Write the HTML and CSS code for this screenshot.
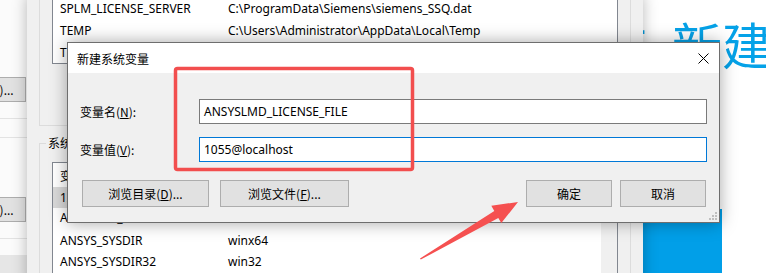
FILE: index.html
```html
<!DOCTYPE html>
<html lang="zh-CN">
<head>
<meta charset="utf-8">
<title>新建系统变量</title>
<link rel="stylesheet" href="styles.css">
</head>
<body>
<div class="desk">
  <div class="web">
    <div class="web-title"><span class="web-pre">击</span>新建</div>
    <div class="web-btn"></div>
  </div>

  <div class="lw">
    <div class="lw-inner">
      <div class="lw-btn lw-btn1">编辑文本(T)...</div>
      <div class="lw-line lw-line1"></div>
      <div class="lw-line lw-line2"></div>
      <div class="lw-btn lw-btn2">编辑文本(T)...</div>
      <div class="lw-line lw-line3"></div>
      <div class="lw-foot"></div>
    </div>
  </div>

  <div class="env">
    <div class="grp1">
      <div class="list1">
        <div class="row"><span class="c1">SPLM_LICENSE_SERVER</span><span class="c2">C:\ProgramData\Siemens\siemens_SSQ.dat</span></div>
        <div class="row"><span class="c1">TEMP</span><span class="c2">C:\Users\Administrator\AppData\Local\Temp</span></div>
        <div class="row"><span class="c1">TMP</span><span class="c2">C:\Users\Administrator\AppData\Local\Temp</span></div>
      </div>
      <div class="grp1-btns"></div>
    </div>
    <fieldset class="grp2">
      <legend>系统变量(S)</legend>
      <div class="list2">
        <div class="list2-main">
          <div class="hdr"><span class="c1">变量</span><span class="c2">值</span></div>
          <div class="row2 sel"><span class="c1">123</span><span class="c2">C:\ANSYS Inc\v195</span></div>
          <div class="row2 r-hid"><span class="c1">ANSYS195_DIR</span><span class="c2">D:\ANSYS Inc\v195\ANSYS</span></div>
          <div class="row2"><span class="c1">ANSYS_SYSDIR</span><span class="c2">winx64</span></div>
          <div class="row2"><span class="c1">ANSYS_SYSDIR32</span><span class="c2">win32</span></div>
        </div>
        <div class="vscroll"></div>
      </div>
    </fieldset>
  </div>

  <div class="dlg">
    <div class="dlg-title">
      <span>新建系统变量</span>
      <svg class="close" width="11" height="11" viewBox="0 0 11 11"><path d="M0.5 0.5 L10.5 10.5 M10.5 0.5 L0.5 10.5" stroke="#000" stroke-width="1" fill="none"/></svg>
    </div>
    <div class="dlg-body">
      <div class="field">
        <label class="lbl">变量名(<u>N</u>):</label>
        <div class="inp">ANSYSLMD_LICENSE_FILE</div>
      </div>
      <div class="field">
        <label class="lbl">变量值(<u>V</u>):</label>
        <div class="inp focus">1055@localhost</div>
      </div>
      <div class="btns">
        <div class="btn b-dir">浏览目录(<u>D</u>)...</div>
        <div class="btn b-file">浏览文件(<u>F</u>)...</div>
        <div class="spacer"></div>
        <div class="btn b-ok">确定</div>
        <div class="btn b-cancel">取消</div>
      </div>
    </div>
    <svg class="grip" width="10" height="10" viewBox="0 0 10 10">
      <rect x="7" y="1" width="2" height="2" fill="#bfbfbf"/>
      <rect x="4" y="4" width="2" height="2" fill="#bfbfbf"/>
      <rect x="7" y="4" width="2" height="2" fill="#bfbfbf"/>
      <rect x="1" y="7" width="2" height="2" fill="#bfbfbf"/>
      <rect x="4" y="7" width="2" height="2" fill="#bfbfbf"/>
      <rect x="7" y="7" width="2" height="2" fill="#bfbfbf"/>
    </svg>
  </div>

  <svg class="marks" width="766" height="273" viewBox="0 0 766 273">
    <rect x="175.5" y="68.5" width="237" height="101" rx="2" fill="none" stroke="#f24e4e" stroke-width="3.5"/>
    <polygon points="420,258.5 494.3,210.9 491.3,205.7 518,202 501.3,223.1 498.3,217.9 420.8,259.6" fill="#f55050"/>
  </svg>
</div>
</body>
</html>
```

FILE: styles.css
```css
html, body {
  margin: 0;
  padding: 0;
  background: #ffffff;
}

body {
  font-family: "Noto Sans", "Noto Sans CJK SC", sans-serif;
  font-size: 12px;
  color: #000;
}

.desk {
  position: relative;
  width: 766px;
  height: 273px;
  overflow: hidden;
  background: #ffffff;
}

/* web page behind, right side */
.web {
  position: absolute;
  left: 600px;
  top: 0;
  width: 166px;
  height: 273px;
  background: #ffffff;
}

.web-title {
  margin-left: 1px;
  margin-top: 13px;
  font-family: "Noto Sans CJK SC", sans-serif;
  font-size: 50px;
  line-height: 60px;
  color: #05a2e8;
  white-space: nowrap;
}

.web-pre {
  margin-right: 21px;
}

.web-btn {
  margin-top: 136px;
  margin-left: 30px;
  width: 92px;
  height: 70px;
  background: #019fe8;
}

/* leftmost window strip */
.lw {
  position: absolute;
  left: 0;
  top: 0;
  width: 27px;
  height: 273px;
  overflow: hidden;
  background: #fbfbfb;
}

.lw-inner {
  margin-left: -72px;
  width: 99px;
  padding-top: 77px;
}

.lw-btn {
  height: 25px;
  box-sizing: border-box;
  width: 98px;
  border: 1px solid #adadad;
  background: #e1e1e1;
  display: flex;
  align-items: center;
  justify-content: center;
  font-family: "Noto Sans CJK SC", sans-serif;
}

.lw-line {
  height: 1px;
  background: #e3e3e3;
}

.lw-line1 { margin-top: 16px; }
.lw-line2 { margin-top: 18px; margin-bottom: 59px; }
.lw-line3 { margin-top: 16px; }

.lw-foot {
  margin-top: 16px;
  height: 20px;
  background: #e6e6e6;
}

/* environment variables window */
.env {
  position: absolute;
  left: 27px;
  top: -5px;
  width: 616px;
  height: 290px;
  box-sizing: border-box;
  padding: 0 12px;
  background: #f0f0f0;
  box-shadow: 0 0 14px rgba(0, 0, 0, 0.28);
}

.grp1 {
  border: 1px solid #dcdcdc;
  padding: 0 12px;
}

.list1 {
  border: 1px solid #828790;
  background: #fff;
}

.row {
  height: 22px;
  display: flex;
  align-items: center;
  white-space: nowrap;
}

.c1 {
  width: 168px;
  padding-left: 7px;
  flex: none;
}

.c2 {
  flex: none;
}

.grp1-btns {
  height: 61px;
}

.grp2 {
  margin: 9px 0 0 0;
  padding: 0 12px;
  border: 1px solid #dcdcdc;
  min-width: 0;
}

.grp2 legend {
  margin-left: -6px;
  padding: 0 2px;
  line-height: 16px;
  font-family: "Noto Sans CJK SC", sans-serif;
}

.list2 {
  margin-top: 11px;
  border: 1px solid #828790;
  background: #fff;
  display: flex;
  height: 140px;
}

.list2-main {
  flex: 1;
}

.hdr {
  height: 24px;
  display: flex;
  align-items: center;
  font-family: "Noto Sans CJK SC", sans-serif;
}

.row2 {
  height: 21px;
  display: flex;
  align-items: center;
  white-space: nowrap;
}

.row2.r-hid {
  align-items: flex-start;
  padding-top: 1px;
  box-sizing: border-box;
  height: 22px;
}

.row2.sel {
  background: #d9d9d9;
}

.vscroll {
  width: 16px;
  background: #f0f0f0;
}

/* dialog */
.dlg {
  position: absolute;
  left: 67px;
  top: 42px;
  width: 653px;
  height: 181px;
  box-sizing: border-box;
  border: 1px solid #6e6e6e;
  background: #f0f0f0;
  box-shadow: 0 0 16px rgba(0, 0, 0, 0.35);
}

.dlg-title {
  height: 30px;
  background: #ffffff;
  display: flex;
  align-items: center;
  justify-content: space-between;
  padding: 0 10px 0 9px;
  font-family: "Noto Sans CJK SC", sans-serif;
}

.close {
  display: block;
}

.dlg-body {
  padding: 26px 12px 15px 12px;
}

.field {
  display: flex;
  align-items: center;
  margin-bottom: 13px;
}

.field:last-of-type {
  margin-bottom: 0;
}

.lbl {
  width: 119px;
  flex: none;
  font-family: "Noto Sans CJK SC", sans-serif;
}

.inp {
  flex: 1;
  height: 25px;
  box-sizing: border-box;
  border: 1px solid #7a7a7a;
  background: #fff;
  padding-left: 4px;
  display: flex;
  align-items: center;
  white-space: nowrap;
}

.inp.focus {
  border-color: #0078d7;
}

.btns {
  display: flex;
  margin: 18px 1px 0 2px;
}

.btn {
  height: 27px;
  box-sizing: border-box;
  border: 1px solid #adadad;
  background: #e1e1e1;
  display: flex;
  align-items: center;
  justify-content: center;
  font-family: "Noto Sans CJK SC", sans-serif;
}

.b-dir { width: 127px; }
.b-file { width: 129px; margin-left: 11px; }
.spacer { flex: 1; }
.b-ok { width: 86px; }
.b-cancel { width: 86px; margin-left: 8px; }

.grip {
  position: absolute;
  right: 1px;
  bottom: 1px;
}

.marks {
  position: absolute;
  left: 0;
  top: 0;
  pointer-events: none;
}
```
